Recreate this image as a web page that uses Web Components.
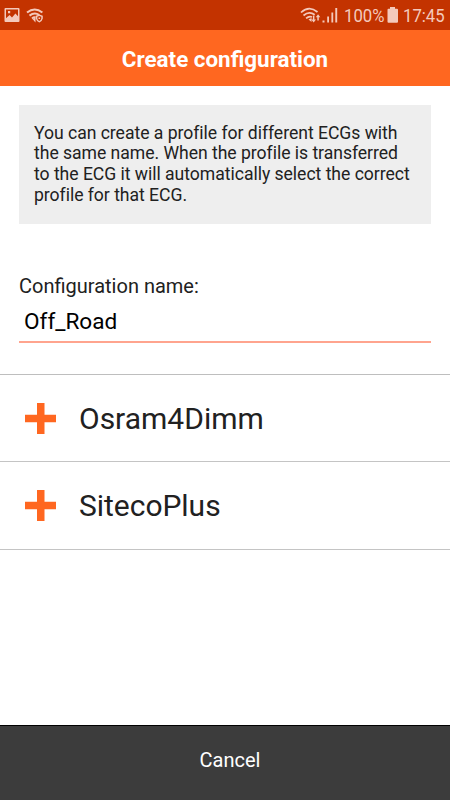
<!DOCTYPE html>
<html lang="en">
<head>
<meta charset="utf-8">
<title>Create configuration</title>
<style>
html,body{margin:0;height:100%}
body{background:#fff;font-family:Roboto,"Liberation Sans",sans-serif;color:#212121;overflow:hidden}
</style>
</head>
<body>
<app-screen>
  <status-bar slot="top"></status-bar>
  <title-bar slot="top">Create configuration</title-bar>
  <info-box>You can create a profile for different ECGs with<br>the same name. When the profile is transferred<br>to the ECG it will automatically select the correct<br>profile for that ECG.</info-box>
  <text-field value="Off_Road">Configuration name:</text-field>
  <option-list>
    <option-row style="height:87px">Osram4Dimm</option-row>
    <option-row style="height:88px;letter-spacing:-.03px">SitecoPlus</option-row>
  </option-list>
  <action-bar slot="bottom">Cancel</action-bar>
</app-screen>
<script>
function define(name, html) {
  const t = document.createElement('template');
  t.innerHTML = html;
  customElements.define(name, class extends HTMLElement {
    constructor() {
      super();
      this.attachShadow({mode: 'open'}).append(t.content.cloneNode(true));
    }
    connectedCallback() {
      const v = this.shadowRoot.querySelector('[data-value]');
      if (v) v.textContent = this.getAttribute('value');
    }
  });
}
define('app-screen', `<style>
:host{display:flex;flex-direction:column;width:450px;height:800px}
main{flex:1;min-height:0}
</style><slot name="top"></slot><main><slot></slot></main><slot name="bottom"></slot>`);

define('status-bar', `<style>
:host{display:flex;align-items:center;height:30px;background:#c33300;color:#f4c9bb;box-sizing:border-box;padding:0 5.500px 0 4px;font-size:19px;line-height:31px}
svg{display:block;fill:currentColor;flex:none}
.gap{flex:1}
.s{fill:none;stroke:currentColor}
.pct,.time{white-space:nowrap;transform:scaleX(.88);transform-origin:0 50%}
.pct{margin-left:3.500px;width:43px}
.time{margin-left:4px;width:42px}
</style>
<svg width="42" height="30" viewBox="0 0 42 30">
  <path fill-rule="evenodd" d="M1.500 8h13q1 0 1 1v12q0 1-1 1h-13q-1 0-1-1V9q0-1 1-1zM2 9.600v8.600l3.600-3.200 2.400 2.400 3.400-3.800 2.600 2.600V9.600zM4 11h2.200v2.200H4z"/>
  <g class="s" stroke-width="2"><path d="M23 12.500Q30.700 6.500 38.400 12.500"/><path d="M25.500 15.600Q30.500 11.700 35.300 15"/><path d="M28 18.500Q30 16.800 31.500 17.500"/></g>
  <path d="M28.500 19l3-1.500v5z"/>
  <path fill-rule="evenodd" d="M35.300 14.500l3.500 1.300v2.800q-.4 2.500-3.500 3.900-3.100-1.400-3.500-3.900v-2.800zM35.300 16l-2 .8v1.700q.3 1.600 2 2.500 1.700-.9 2-2.500v-1.700zM34.500 17.500h1.600v1.600h-1.600z"/>
</svg>
<span class="gap"></span>
<svg width="40" height="30" viewBox="0 0 40 30">
  <g class="s" stroke-width="1.700"><path d="M1 12.500Q9 5 17.500 12"/><path d="M3.500 15.500Q9 10.500 14.700 14.700"/><path d="M6.100 18.300Q9 15.700 12 17"/></g>
  <path d="M8.500 19.500l3-1.600v4zM12.900 15.600h1.500v3.900H16l-2.350 3-2.350-3h1.600zM17.300 20.500h1.500v-3.300h1.500L18.050 14.300l-2.250 2.900h1.500z"/>
  <path d="M22.500 20.500h2v2h-2zM27.200 16.500h1.800v6h-1.800zM31.400 12.500h1.800v10h-1.800zM35.300 8h1.900v14.500h-1.900z"/>
</svg>
<span class="pct">100%</span>
<svg width="12" height="30" viewBox="0 0 12 30"><path d="M3 7h5v1.800h2q1 0 1 1v12q0 1-1 1H1.500q-1 0-1-1v-12q0-1 1-1H3z"/></svg>
<span class="time">17:45</span>`);

define('title-bar', `<style>
:host{display:flex;justify-content:center;height:56px;line-height:58px;background:#ff6720;color:#fff;font-weight:700;font-size:22.400px}
</style><slot></slot>`);

define('info-box', `<style>
:host{display:block;box-sizing:border-box;margin:19px 19px 0;height:119px;padding:17.500px 15px;background:#eee;font-size:17.600px;letter-spacing:-.035px;line-height:20.800px;white-space:nowrap}
</style><slot></slot>`);

define('text-field', `<style>
:host{display:block;margin:50px 19px 0}
.label{height:25px;line-height:25px;font-size:20px}
.value{height:44px;line-height:46px;padding-left:5px;font-size:22.600px;color:#000;border-bottom:2px solid #ffa48e;box-sizing:border-box}
</style><div class="label"><slot></slot></div><div class="value" data-value></div>`);

define('option-list', `<style>
:host{display:block;margin-top:31px;border-top:1px solid #bebebe}
</style><slot></slot>`);

define('option-row', `<style>
:host{display:flex;align-items:center;gap:23px;box-sizing:border-box;padding-left:25px;border-bottom:1px solid #c4c4c4;font-size:30px}
svg{display:block}
</style><svg width="31" height="31" viewBox="0 0 31 31"><path fill="#ff6720" d="M12 0h7.500v11.700H31v7.600H19.500V31H12V19.300H0v-7.600h12z"/></svg><span><slot></slot></span>`);

define('action-bar', `<style>
:host{display:block;box-sizing:border-box;height:75px;border-top:1px solid #000;background:#3c3c3c;color:#fff;text-align:center;padding-left:10px;line-height:68px;font-size:20px}
</style><slot></slot>`);
</script>
</body>
</html>
